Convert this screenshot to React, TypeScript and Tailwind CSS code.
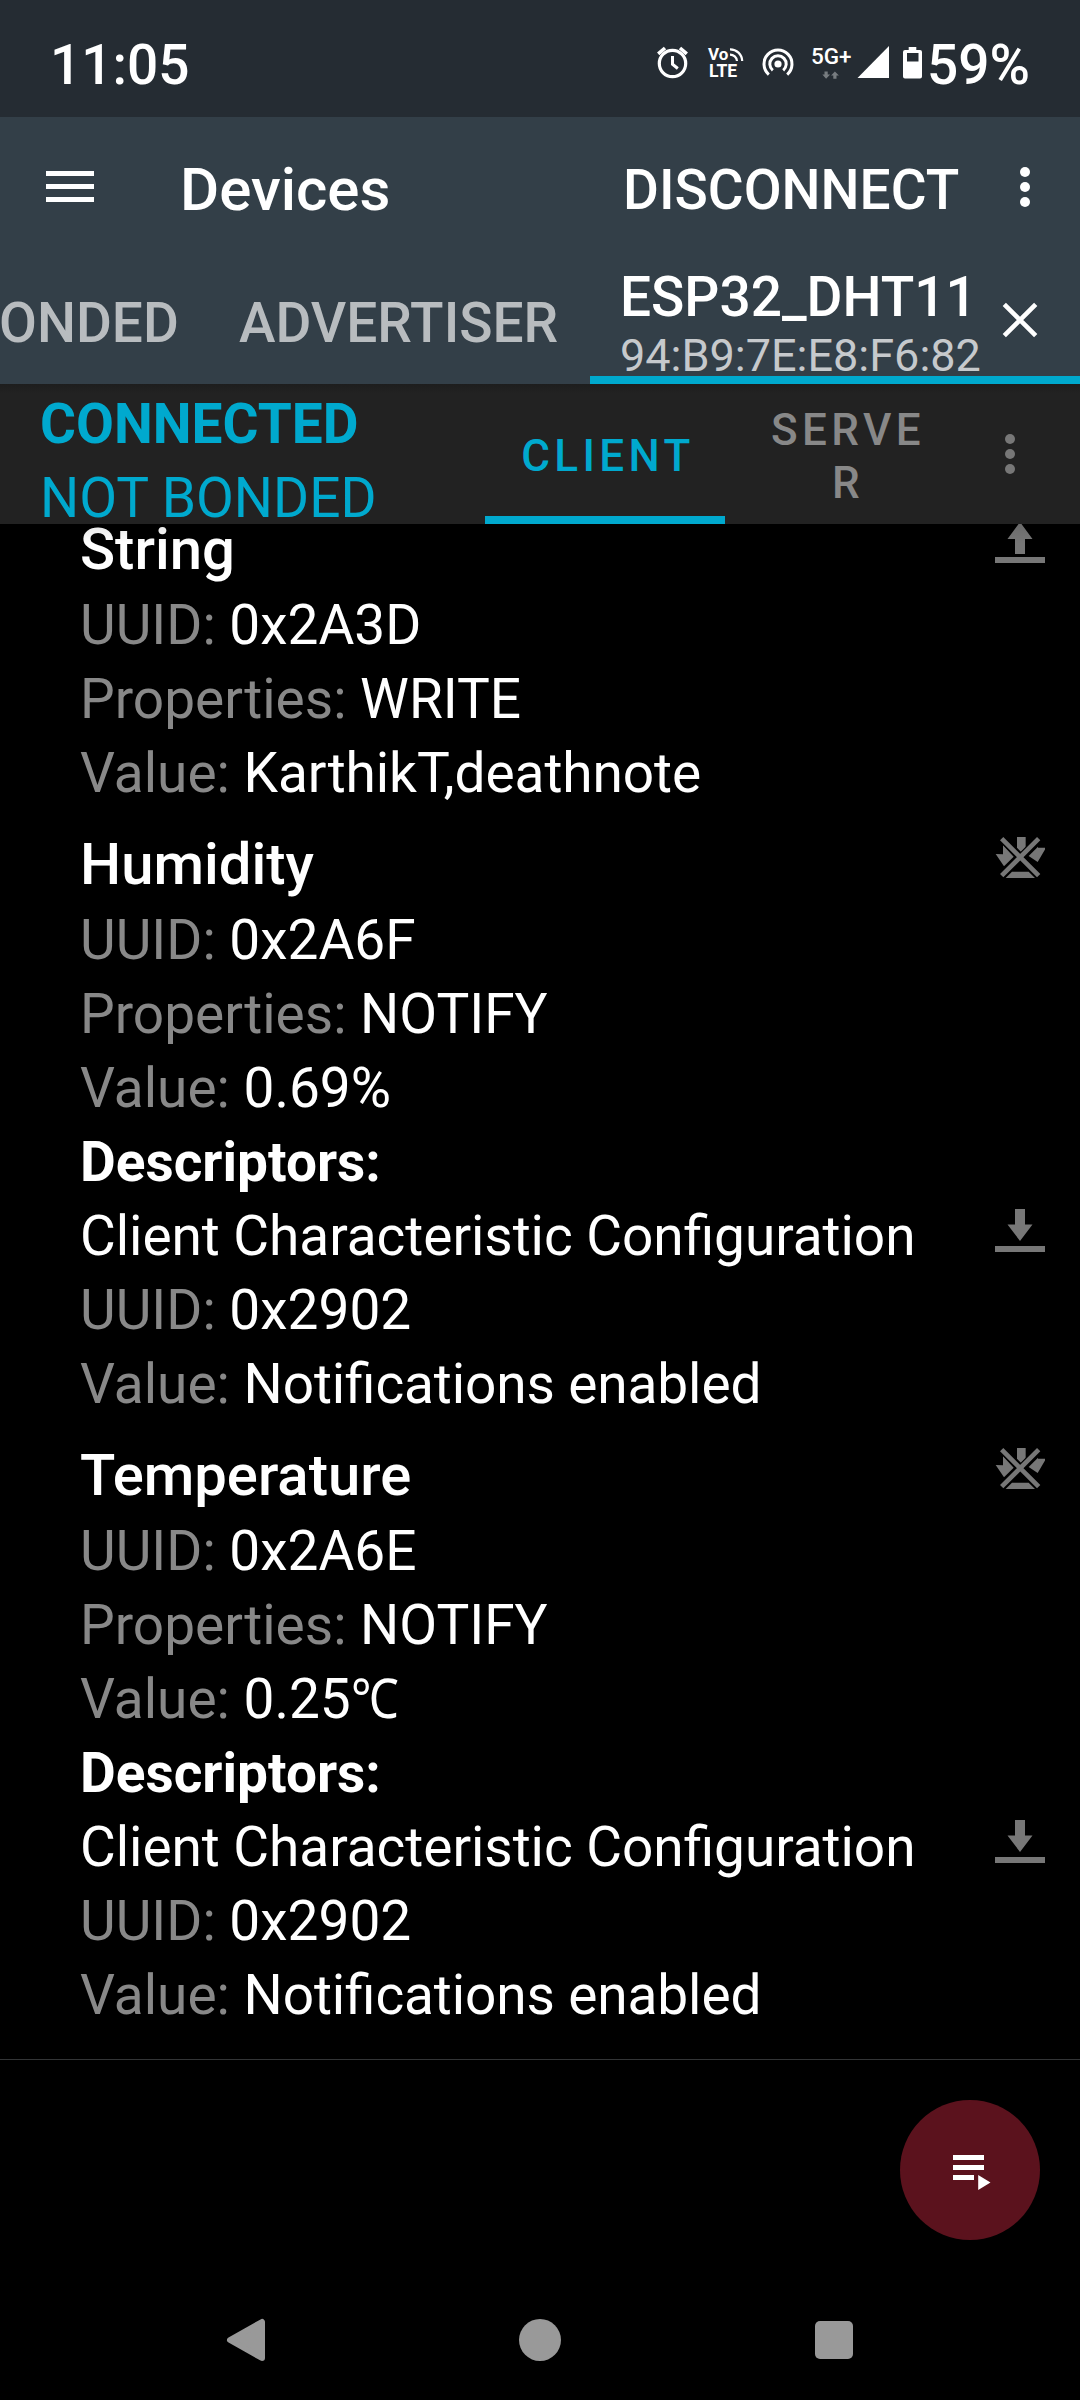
import type { ReactNode } from 'react';

function AlarmIcon() {
  return (
    <svg className="h-[34px] w-[34px]" viewBox="0 0 34 34" fill="none" stroke="#fff">
      <circle cx="17.5" cy="18.5" r="13.2" strokeWidth="3.2" />
      <path d="M17.5 11v8.3l5.3 4.2" strokeWidth="3" />
      <path d="M3.2 8.8L10 3M31.8 8.8L25 3" strokeWidth="3.6" />
    </svg>
  );
}

function VolteIcon() {
  return (
    <div className="relative h-[34px] w-[36px] font-bold text-white">
      <div className="absolute top-[1px] left-0 text-[17px] leading-[16px]">Vo</div>
      <div className="absolute top-[17px] left-[1px] text-[17.5px] leading-[18px]">LTE</div>
      <svg className="absolute top-[3px] left-[21px] h-[14px] w-[15px]" viewBox="0 0 15 14" fill="none" stroke="#fff" strokeWidth="2.2">
        <path d="M1 1.3A12 12 0 0 1 13.2 13M1 6.6A7 7 0 0 1 8 13" />
      </svg>
    </div>
  );
}

function HotspotIcon() {
  return (
    <svg className="h-[34px] w-[34px]" viewBox="-17 -17 34 34" fill="none" stroke="#fff" strokeWidth="3">
      <circle r="3.6" fill="#fff" stroke="none" />
      <path d="M-5.2 6.3A8.2 8.2 0 1 1 5.2 6.3" />
      <path d="M-9.2 10.6A14 14 0 1 1 9.2 10.6" />
    </svg>
  );
}

function StatusBar() {
  return (
    <div className="flex h-[117px] bg-[#252c33] text-white">
      <div className="mt-[33px] ml-[50px] w-[605px] text-[55px] leading-[64px] font-medium">11:05</div>
      <div className="mt-[45px] flex h-[34px]">
        <AlarmIcon />
        <div className="ml-[19px]"><VolteIcon /></div>
        <div className="mt-[2px] ml-[17px]"><HotspotIcon /></div>
        <div className="ml-[16px] flex w-[43px] flex-col">
          <div className="mt-[-2px] text-[22.5px] leading-[27px] font-medium whitespace-nowrap">5G+</div>
          <svg className="mt-[1px] ml-[9px] h-[10px] w-[21px]" viewBox="0 0 21 10" fill="#777c80">
            <path d="M3 0.5h4v4h3L5 9.8 0.3 4.5H3zM14 9.6h4v-4h3L16 0.5 11.2 5.6H14z" />
          </svg>
        </div>
        <svg className="ml-[3px] h-[34px] w-[33px]" viewBox="0 0 33 34" fill="#fff">
          <path d="M0.5 33L32 1V33z" />
        </svg>
        <svg className="ml-[13px] h-[34px] w-[20px]" viewBox="0 0 20 34" fill="#fff" fillRule="evenodd">
          <path d="M5.7 2h7.6v3H17a2 2 0 0 1 2 2v24.500a2 2 0 0 1-2 2H2a2 2 0 0 1-2-2V7a2 2 0 0 1 2-2h3.700zM4 8v8.500h11.500V8z" />
        </svg>
      </div>
      <div className="mt-[33px] ml-[4px] text-[55px] leading-[64px] font-medium">59%</div>
    </div>
  );
}

function MoreDots({ className }: { className: string }) {
  return (
    <svg className={className} viewBox="0 0 10 40" fill="currentColor">
      <circle cx="5" cy="5" r="5" />
      <circle cx="5" cy="20" r="5" />
      <circle cx="5" cy="35" r="5" />
    </svg>
  );
}

function Toolbar() {
  return (
    <div className="flex h-[148px] text-white">
      <div className="mt-[54px] ml-[46px] flex w-[48px] flex-col gap-[8px]">
        <div className="h-[5px] bg-white" />
        <div className="h-[5px] bg-white" />
        <div className="h-[5px] bg-white" />
      </div>
      <div className="mt-[37px] ml-[86px] w-[443px] text-[60px] leading-[71px] font-medium">Devices</div>
      <div className="mt-[41px] w-[397px] text-[55px] leading-[64px] font-medium">DISCONNECT</div>
      <MoreDots className="mt-[50px] h-[40px] w-[10px]" />
    </div>
  );
}

function DeviceTabs() {
  return (
    <div className="flex h-[119px] text-[55px] leading-[64px] font-medium text-[#b8bcbf]">
      <div className="mt-[26px] ml-[-1px] w-[240px]">ONDED</div>
      <div className="mt-[26px] w-[351px]">ADVERTISER</div>
      <div className="flex w-[490px] border-b-8 border-[#00a9ce]">
        <div className="ml-[30px] w-[382px] text-white">
          <div>ESP32_DHT11</div>
          <div className="text-[45px] leading-[53px] font-normal text-[#c6c9cc]">94:B9:7E:E8:F6:82</div>
        </div>
        <svg className="mt-[37px] h-[36px] w-[36px]" viewBox="0 0 36 36" stroke="#fff" strokeWidth="4.6">
          <path d="M2.300 2.300L33.700 33.700M33.700 2.300L2.300 33.700" />
        </svg>
      </div>
    </div>
  );
}

function ConnectionBar() {
  return (
    <div className="relative z-10 flex h-[140px] bg-[#222222]">
      <div className="mt-[3px] ml-[40px] h-[137px] w-[445px] text-[55px] leading-[74px] text-[#00a9ce]">
        <div className="font-bold">CONNECTED</div>
        <div className="h-[63px]">NOT BONDED</div>
      </div>
      <div className="w-[240px] border-b-8 border-[#00a9ce] pt-[46px] pl-[6px] text-center text-[44px] leading-[53px] font-medium tracking-[4.4px] text-[#00a9ce]">
        CLIENT
      </div>
      <div className="w-[240px] pt-[20px] pl-[6px] text-center text-[44px] leading-[53px] font-medium tracking-[4.4px] text-[#888888]">
        SERVE
        <br />R
      </div>
      <MoreDots className="mt-[50px] ml-[40px] h-[40px] w-[10px] text-[#777777]" />
      <div className="absolute inset-x-0 top-0 h-[10px] bg-gradient-to-b from-black/15 to-transparent" />
      <div className="absolute inset-x-0 top-full h-[20px] bg-gradient-to-b from-black/10 to-transparent" />
    </div>
  );
}

function WriteIcon() {
  return (
    <svg className="h-[54px] w-[50px]" viewBox="0 0 50 54" fill="#777777">
      <path d="M25 10L37.500 27H30v15H20V27h-7.500zM0 45h50v6H0z" />
    </svg>
  );
}

function ReadIcon() {
  return (
    <svg className="h-[54px] w-[50px]" viewBox="0 0 50 54" fill="#777777">
      <path d="M20 10h10v15.500h7.500L25 42 12.500 25.500H20zM0 47h50v6H0z" />
    </svg>
  );
}

function StopNotifyIcon() {
  return (
    <svg className="mt-[8px] h-[45px] w-[50px]" viewBox="105 75 150 135" fill="#777777">
      <path d="M171 81h26v32l-13 14-13-14zM107 132l22 1V106l32 34-29 29zM206 138l28-28v3h24l-25 43zM156 185h50l19 19h-88z" />
      <path d="M124 85L237 198M237 85L124 198" stroke="#000" strokeWidth="21" />
      <path d="M125 86L236 197M236 86L125 197" stroke="#777777" strokeWidth="14" />
    </svg>
  );
}

function Row({ label, children, icon }: { label?: string; children: ReactNode; icon?: ReactNode }) {
  return (
    <div className="flex h-[74px] justify-between pr-[35px]">
      <div className="whitespace-nowrap">
        {label && <span className="text-[#888888]">{label}: </span>}
        {children}
      </div>
      {icon}
    </div>
  );
}

type Characteristic = { name: string; uuid: string; property: string; value: ReactNode; notify?: boolean };

const temperature = (
  <>
    0.25<span className="inline-block origin-left scale-x-[0.87]">℃</span>
  </>
);

const characteristics: Characteristic[] = [
  { name: 'String', uuid: '0x2A3D', property: 'WRITE', value: <span className="tracking-[-0.08px]">KarthikT,deathnote</span> },
  { name: 'Humidity', uuid: '0x2A6F', property: 'NOTIFY', value: '0.69%', notify: true },
  { name: 'Temperature', uuid: '0x2A6E', property: 'NOTIFY', value: temperature, notify: true },
];

function CharacteristicBlock({ item }: { item: Characteristic }) {
  return (
    <div className="text-[55px] leading-[74px] text-white">
      <div className="mb-[2px] flex h-[74px] justify-between pr-[35px]">
        <div className="text-[58px] font-medium">{item.name}</div>
        {item.notify ? <StopNotifyIcon /> : <WriteIcon />}
      </div>
      <Row label="UUID">{item.uuid}</Row>
      <Row label="Properties">{item.property}</Row>
      <Row label="Value">{item.value}</Row>
      {item.notify && (
        <>
          <Row><span className="font-bold">Descriptors:</span></Row>
          <Row icon={<ReadIcon />}>
            <span className="tracking-[-0.05px] [font-feature-settings:'liga'_1]">Client Characteristic Configuration</span>
          </Row>
          <Row label="UUID">0x2902</Row>
          <Row label="Value">
            <span className="tracking-[-0.12px] [font-feature-settings:'liga'_1]">Notifications enabled</span>
          </Row>
        </>
      )}
    </div>
  );
}

export default function App() {
  return (
    <div className="flex h-[2400px] w-[1080px] flex-col overflow-hidden bg-black font-['Roboto',sans-serif]">
      <StatusBar />
      <div className="bg-[#333f48]">
        <Toolbar />
        <DeviceTabs />
      </div>
      <ConnectionBar />
      <div className="mt-[-12px] flex h-[1548px] flex-col gap-[17px] border-b border-[#333536] pl-[80px]">
        {characteristics.map((item) => (
          <CharacteristicBlock key={item.uuid} item={item} />
        ))}
      </div>
      <div className="flex h-[220px] justify-end pt-[40px] pr-[40px]">
        <div className="flex h-[140px] w-[140px] items-center justify-center rounded-full bg-[#5b121d]">
          <svg className="h-[60px] w-[60px]" viewBox="0 0 60 60" fill="#fff">
            <path d="M13 15h31v5H13zM13 25h31v5H13zM13 35h21v5H13zM38.200 35L50.500 42.500 38.200 50z" />
          </svg>
        </div>
      </div>
      <div className="flex h-[120px] items-center justify-between pr-[227px] pl-[226px] text-[#999999]">
        <svg className="h-[44px] w-[39px]" viewBox="0 0 39 44" fill="currentColor" stroke="currentColor" strokeWidth="6" strokeLinejoin="round">
          <path d="M4 22L36 4V40z" />
        </svg>
        <div className="h-[42px] w-[42px] rounded-full bg-[#999999]" />
        <div className="h-[38px] w-[38px] rounded-[5px] bg-[#999999]" />
      </div>
    </div>
  );
}
